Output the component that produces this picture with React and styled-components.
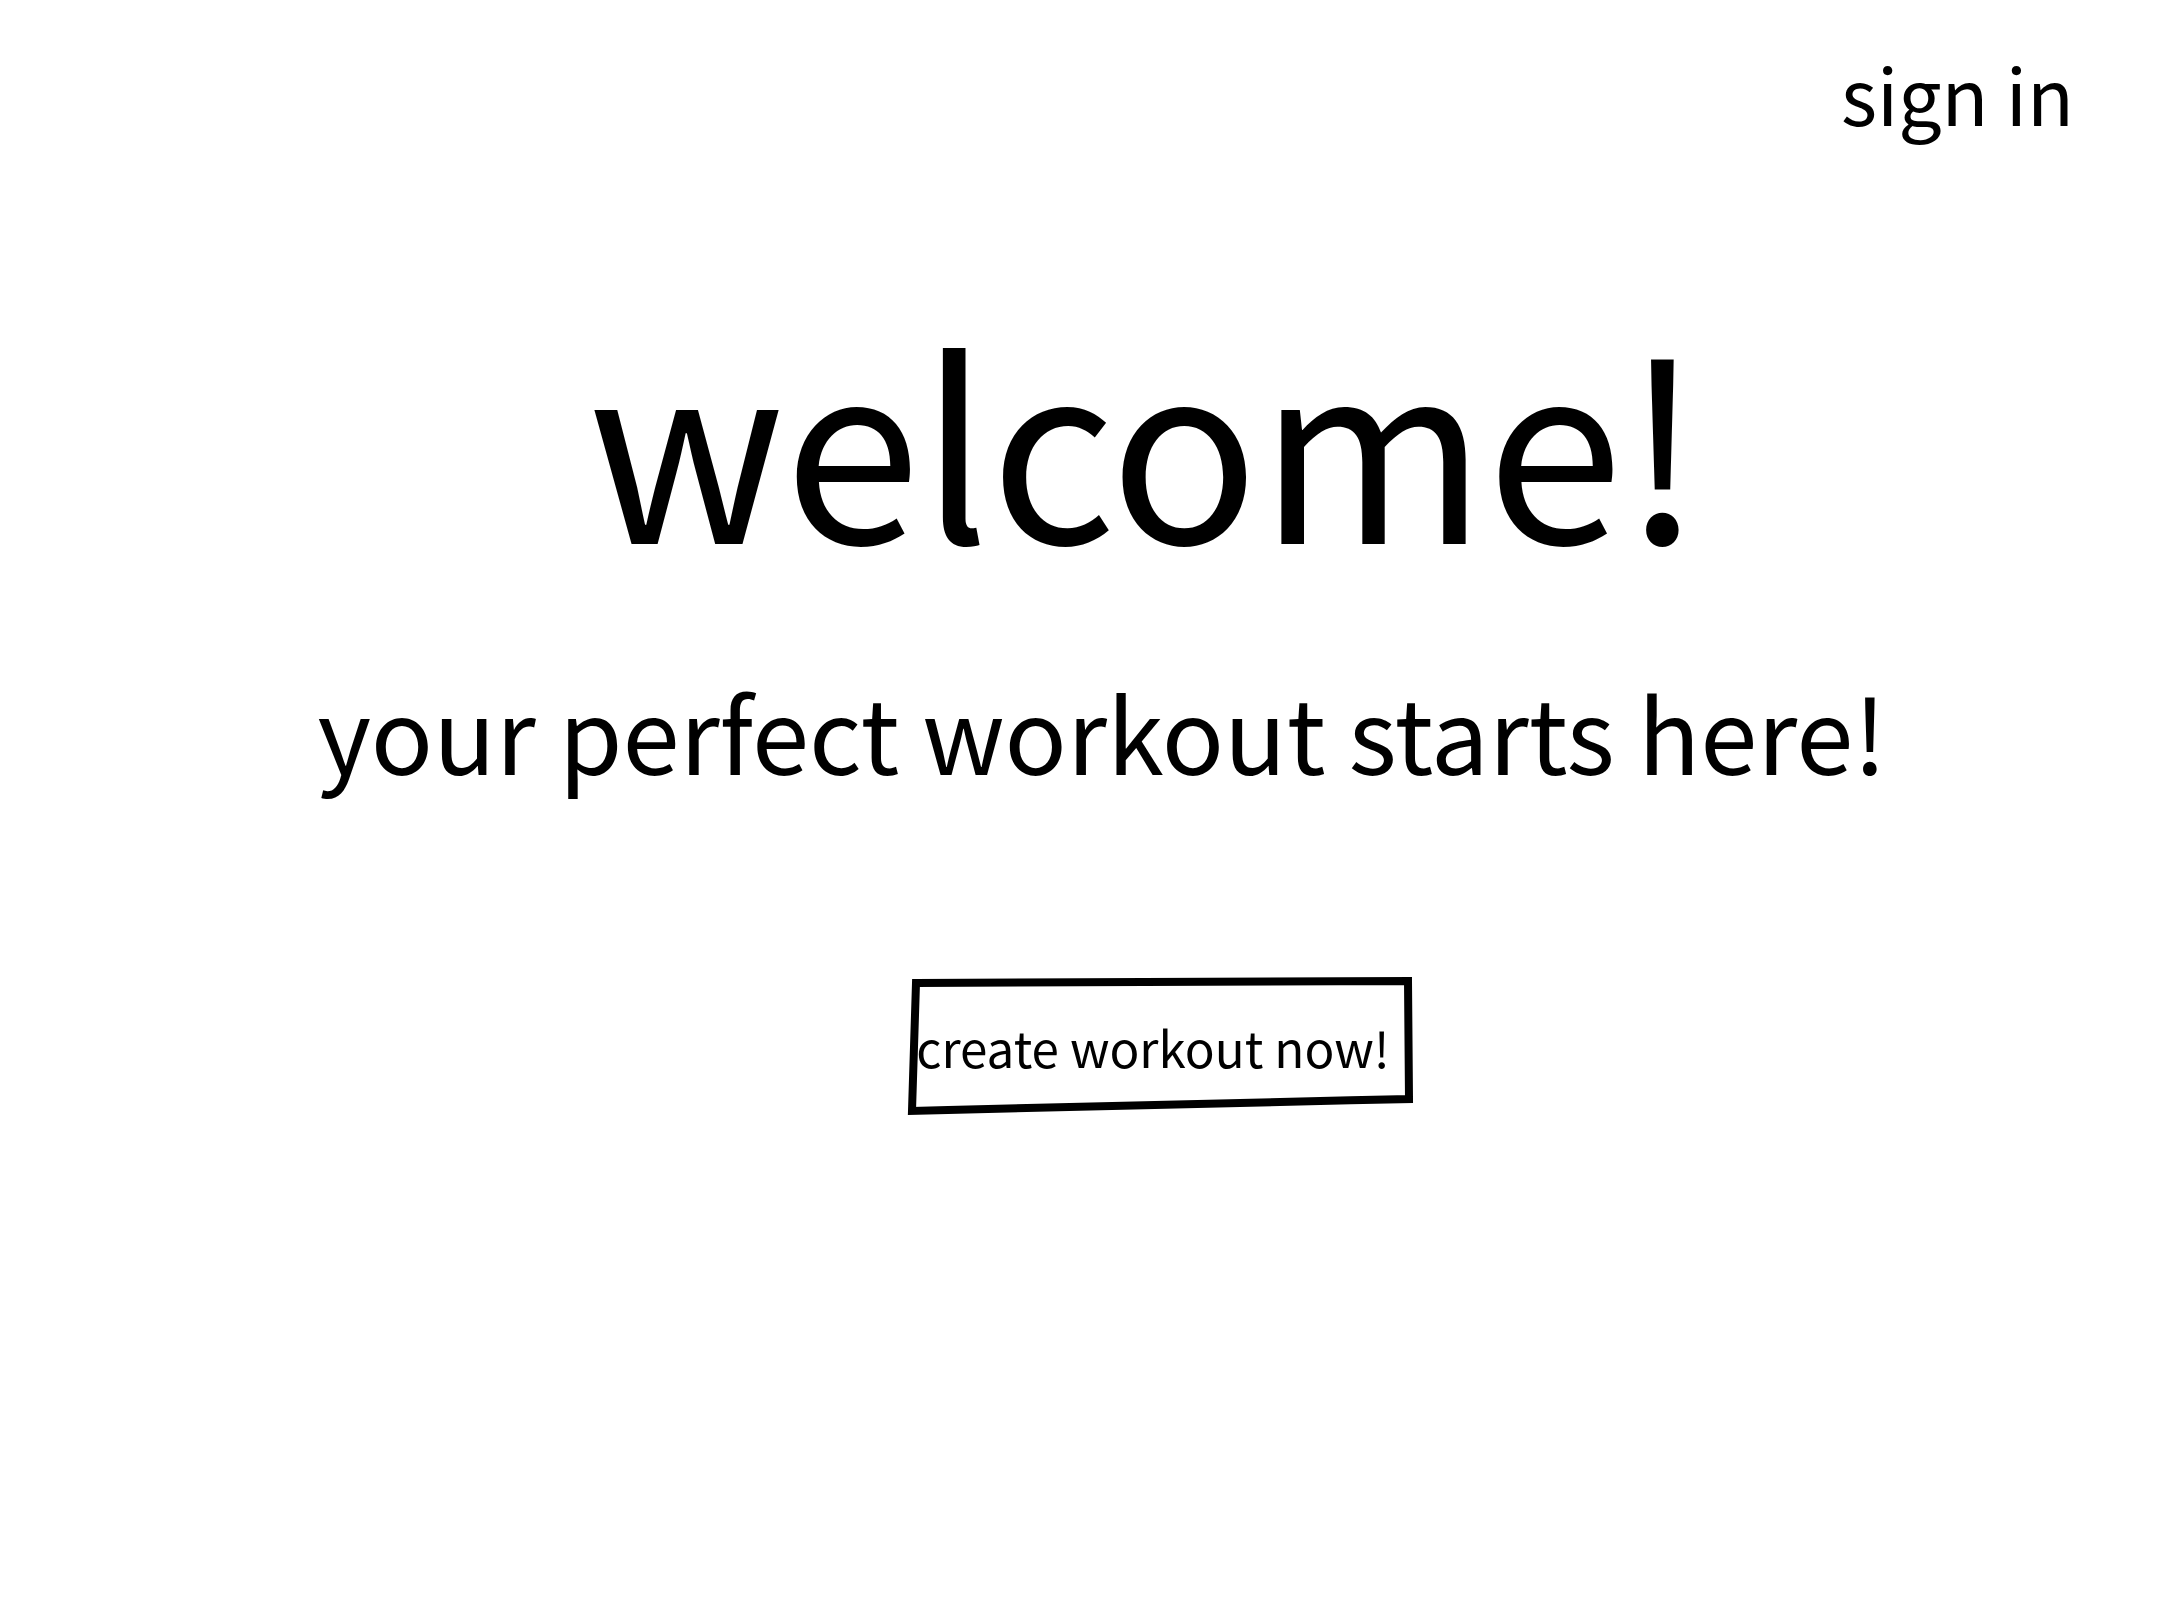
import React from "react";
import styled, { createGlobalStyle } from "styled-components";

const Global = createGlobalStyle`
  html, body { margin: 0; padding: 0; background: #fff; }
  body { font-family: "Noto Sans CJK SC", "Noto Sans", sans-serif; color: #000; }
`;

const Page = styled.div`
  width: 2160px;
  min-height: 1620px;
  display: flex;
  flex-direction: column;
`;

const Header = styled.header`
  display: flex;
  justify-content: flex-end;
  padding: 47px 86px 0 0;
`;

const SignIn = styled.a`
  font-size: 77px;
  line-height: 1.2;
  color: #000;
  text-decoration: none;
  cursor: pointer;
`;

const Main = styled.main`
  display: flex;
  flex-direction: column;
  align-items: stretch;
`;

const Title = styled.h1`
  margin: 0;
  font-weight: 400;
  text-align: center;
  font-size: ${(p) => p.$size}px;
  line-height: 1.2;
  padding-left: ${(p) => p.$shift * 2}px;
  margin-top: ${(p) => p.$top}px;
`;

const ButtonRow = styled.div`
  display: flex;
  justify-content: center;
  padding-left: ${(p) => p.$shift * 2}px;
  margin-top: ${(p) => p.$top}px;
`;

const SketchButton = styled.button`
  position: relative;
  width: 505px;
  height: 138px;
  border: none;
  background: transparent;
  font-family: inherit;
  font-size: 49.4px;
  color: #000;
  padding: 0 14px 0 0;
  cursor: pointer;
  display: flex;
  align-items: center;
  justify-content: center;
`;

const Frame = styled.svg`
  position: absolute;
  inset: 0;
  width: 100%;
  height: 100%;
  overflow: visible;
  pointer-events: none;
`;

export default function App() {
  return (
    <Page>
      <Global />
      <Header>
        <SignIn>sign in</SignIn>
      </Header>
      <Main>
        <Title as="h1" $size={246} $shift={65} $top={151}>welcome!</Title>
        <Title as="h2" $size={103} $shift={22} $top={83}>your perfect workout starts here!</Title>
        <ButtonRow $shift={80} $top={185}>
          <SketchButton>
            <Frame viewBox="0 0 505 138">
              <path
                d="M8 6 L500 4 L501 122 C 330 126, 150 130, 40 133 L4 134 Z"
                fill="none"
                stroke="#000"
                strokeWidth="8"
                strokeLinejoin="miter"
              />
            </Frame>
            create workout now!
          </SketchButton>
        </ButtonRow>
      </Main>
    </Page>
  );
}
